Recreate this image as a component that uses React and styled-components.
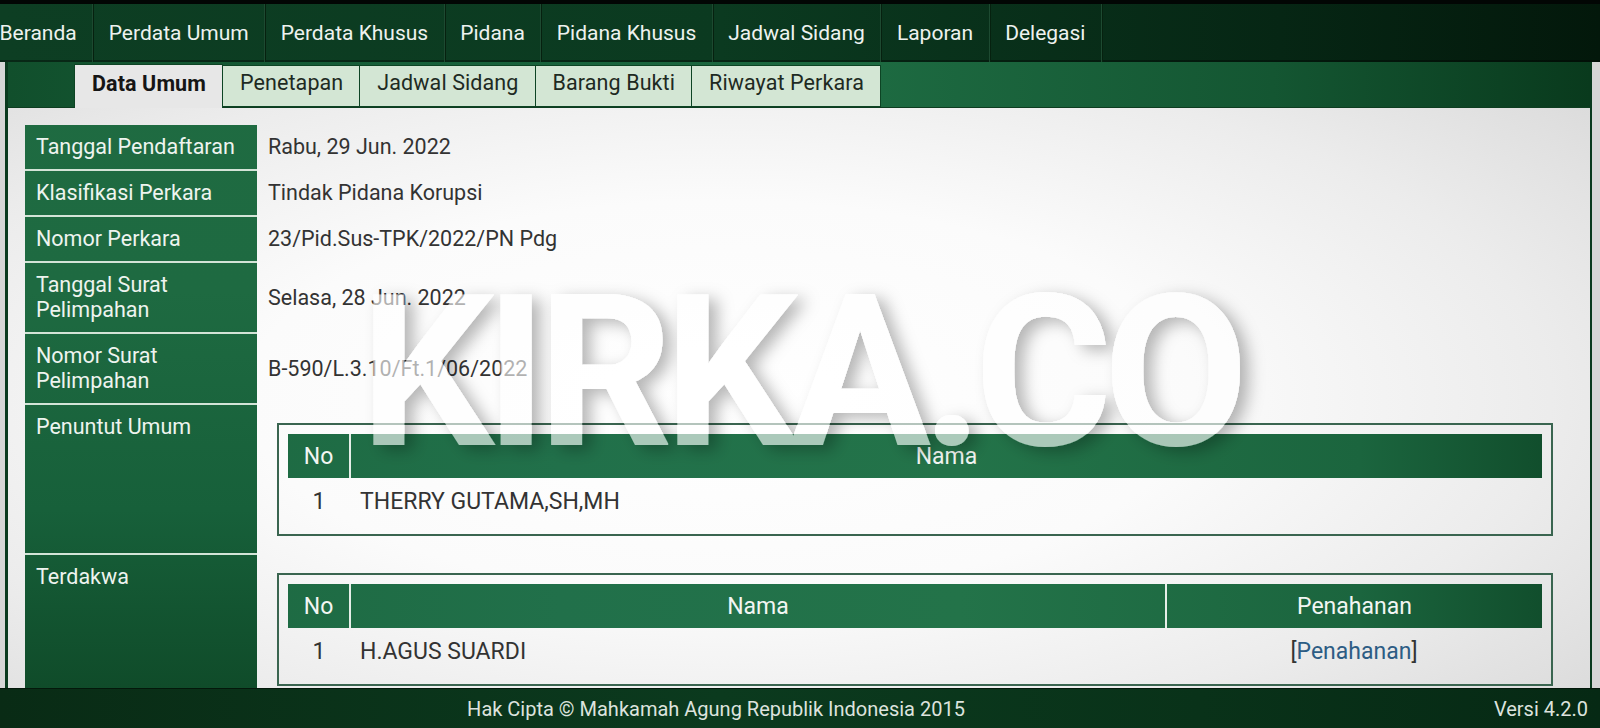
import React from "react";
import styled, { createGlobalStyle } from "styled-components";

const GlobalStyle = createGlobalStyle`
  html, body { margin: 0; padding: 0; height: 100%; overflow: hidden; }
  body { background: #d6d6d6; font-family: Roboto, "Noto Sans", "Liberation Sans", sans-serif; }
  #root { height: 100%; }
`;

const Page = styled.div`
  position: relative;
  height: 100vh;
  display: flex;
  flex-direction: column;
  overflow: hidden;
`;

const NavBar = styled.nav`
  flex: none;
  height: 58px;
  border-top: 4px solid #020604;
  display: flex;
  align-items: stretch;
  background: linear-gradient(to right, #0d3e23 0%, #0b3a20 45%, #062614 80%, #03180b 100%);
  box-shadow: inset 0 -2px 0 rgba(0, 0, 0, 0.35);
`;

const NavItem = styled.a`
  display: flex;
  align-items: center;
  padding: 0 15.5px 1px 15.5px;
  margin-left: ${(p) => (p.$first ? "-16px" : "0")};
  color: #eef2ef;
  font-size: 21px;
  text-decoration: none;
  border-right: 1px solid #1d4a31;
  box-shadow: 1px 0 0 #06210f;
`;

const Main = styled.div`
  flex: 1;
  min-height: 0;
  margin: 0 8px 0 5px;
  border-left: 3px solid #0a3a1e;
  border-right: 2px solid #0a3a1e;
  display: flex;
  flex-direction: column;
`;

const TabRow = styled.div`
  flex: none;
  height: 45px;
  box-sizing: border-box;
  padding-left: 66px;
  display: flex;
  align-items: flex-end;
  background: linear-gradient(to right, #114f2c 0%, #17603a 25%, #1d6a41 55%, #145632 80%, #093a1d 100%);
  position: relative;
  z-index: 1;
`;

const Tab = styled.div`
  height: ${(p) => (p.$active ? "44px" : "42px")};
  margin-bottom: ${(p) => (p.$active ? "-1px" : "0")};
  box-sizing: border-box;
  padding: 0 16px 7px 17px;
  display: flex;
  align-items: center;
  font-size: 21.5px;
  letter-spacing: 0.1px;
  font-weight: ${(p) => (p.$active ? 700 : 400)};
  color: ${(p) => (p.$active ? "#151515" : "#1e2a22")};
  background: ${(p) => (p.$active ? "#e7e7e7" : "#d3e6d4")};
  border: 1px solid #0d4424;
  border-bottom: ${(p) => (p.$active ? "none" : "1px solid #0d4424")};
  border-left: ${(p) => (p.$first ? "1px solid #0d4424" : "none")};
`;

const Panel = styled.div`
  flex: 1;
  min-height: 0;
  overflow: hidden;
  border-top: 1px solid #0d3d20;
  padding: 17px 17px 0 17px;
  background: radial-gradient(ellipse 75% 85% at 45% 50%, #ffffff 0%, #fbfbfb 40%, #ececec 70%, #d8d8d8 100%);
`;

const InfoGrid = styled.div`
  display: grid;
  grid-template-columns: 232px 1fr;
`;

const Label = styled.div`
  background: linear-gradient(to bottom, #1f6b41 0%, #1e6a41 40%, #17603a 70%, #0e4726 100%);
  background-attachment: fixed;
  color: #eef4ef;
  font-size: 21.5px;
  line-height: 25px;
  padding: 9px 10px 10px 11px;
  border-bottom: 2px solid #d3e4d7;
`;

const Value = styled.div`
  color: #333;
  font-size: 21.5px;
  line-height: 25px;
  padding: ${(p) => (p.$top ? "9px 11px 8px" : "9px 11px 10px")};
  display: flex;
  align-items: ${(p) => (p.$top ? "flex-start" : "center")};
  border-bottom: 2px solid transparent;
`;

const SubBox = styled.div`
  flex: 1;
  margin: 9px 9px 9px 9px;
  padding: 9px;
  border: 2px solid #3a6550;
`;

const SubTable = styled.table`
  width: 100%;
  border-collapse: collapse;
  border-spacing: 0;
  font-size: 23px;
`;

const HeadCell = styled.th`
  height: 44px;
  padding: 0;
  font-weight: 400;
  color: #f2f6f3;
  text-align: center;
  width: ${(p) => p.$w || "auto"};
  background: linear-gradient(to right, #1b663d 0%, #21704a 35%, #237349 60%, #1b653e 85%, #0e4727 100%);
  background-attachment: fixed;
  border-left: ${(p) => (p.$first ? "none" : "2px solid #e6eee8")};
`;

const BodyCell = styled.td`
  height: 47px;
  padding: 0 10px;
  color: #333;
  text-align: ${(p) => p.$align || "left"};
`;

const Link = styled.a`
  color: #2d5c84;
  text-decoration: none;
`;

const Footer = styled.footer`
  flex: none;
  height: 39px;
  display: flex;
  align-items: center;
  background: linear-gradient(to right, #092b15 0%, #0b3a1e 45%, #093219 75%, #062914 100%);
  border-top: 1px solid #04180b;
  color: #dde3de;
  font-size: 20px;
`;

const Copyright = styled.div`
  flex: 1;
  text-align: center;
`;

const Version = styled.div`
  width: 168px;
  text-align: right;
  padding-right: 12px;
  box-sizing: border-box;
`;

const Watermark = styled.div`
  position: absolute;
  left: 360px;
  top: 268px;
  font-family: Roboto, "Liberation Sans", sans-serif;
  font-weight: 700;
  font-size: 211px;
  line-height: 1;
  letter-spacing: -9px;
  color: #ffffff;
  white-space: nowrap;
  pointer-events: none;
  filter: url(#wmShadow);
`;

const Hidden = styled.svg`
  position: absolute;
  width: 0;
  height: 0;
`;

const navItems = [
  "Beranda",
  "Perdata Umum",
  "Perdata Khusus",
  "Pidana",
  "Pidana Khusus",
  "Jadwal Sidang",
  "Laporan",
  "Delegasi",
];

const tabs = ["Data Umum", "Penetapan", "Jadwal Sidang", "Barang Bukti", "Riwayat Perkara"];

const rows = [
  ["Tanggal Pendaftaran", "Rabu, 29 Jun. 2022"],
  ["Klasifikasi Perkara", "Tindak Pidana Korupsi"],
  ["Nomor Perkara", "23/Pid.Sus-TPK/2022/PN Pdg"],
  [["Tanggal Surat", "Pelimpahan"], "Selasa, 28 Jun. 2022"],
  [["Nomor Surat", "Pelimpahan"], "B-590/L.3.10/Ft.1/06/2022"],
];

function LabelText({ text }) {
  if (Array.isArray(text)) {
    return (
      <>
        {text[0]}
        <br />
        {text[1]}
      </>
    );
  }
  return text;
}

export default function App() {
  return (
    <Page>
      <GlobalStyle />
      <Hidden aria-hidden="true">
        <defs>
          <filter id="wmShadow" x="-10%" y="-20%" width="120%" height="140%">
            <feGaussianBlur in="SourceAlpha" stdDeviation="8" result="blur" />
            <feOffset in="blur" dx="9" dy="5" result="off" />
            <feComposite in="off" in2="SourceAlpha" operator="out" result="outside" />
            <feFlood floodColor="#000000" floodOpacity="0.28" result="col" />
            <feComposite in="col" in2="outside" operator="in" result="shadow" />
            <feColorMatrix
              in="SourceGraphic"
              type="matrix"
              values="1 0 0 0 0  0 1 0 0 0  0 0 1 0 0  0 0 0 0.62 0"
              result="letters"
            />
            <feMerge>
              <feMergeNode in="shadow" />
              <feMergeNode in="letters" />
            </feMerge>
          </filter>
        </defs>
      </Hidden>

      <NavBar>
        {navItems.map((n, i) => (
          <NavItem key={n} $first={i === 0}>
            {n}
          </NavItem>
        ))}
      </NavBar>

      <Main>
        <TabRow>
          {tabs.map((t, i) => (
            <Tab key={t} $active={i === 0} $first={i === 0}>
              {t}
            </Tab>
          ))}
        </TabRow>
        <Panel>
          <InfoGrid>
            {rows.map(([l, v], i) => (
              <React.Fragment key={i}>
                <Label>
                  <LabelText text={l} />
                </Label>
                <Value>{v}</Value>
              </React.Fragment>
            ))}
            <Label>Penuntut Umum</Label>
            <Value $top>
              <SubBox>
                <SubTable>
                  <thead>
                    <tr>
                      <HeadCell $first $w="61px">No</HeadCell>
                      <HeadCell>Nama</HeadCell>
                    </tr>
                  </thead>
                  <tbody>
                    <tr>
                      <BodyCell $align="center">1</BodyCell>
                      <BodyCell>THERRY GUTAMA,SH,MH</BodyCell>
                    </tr>
                  </tbody>
                </SubTable>
              </SubBox>
            </Value>
            <Label>Terdakwa</Label>
            <Value $top>
              <SubBox>
                <SubTable>
                  <thead>
                    <tr>
                      <HeadCell $first $w="61px">No</HeadCell>
                      <HeadCell>Nama</HeadCell>
                      <HeadCell $w="375px">Penahanan</HeadCell>
                    </tr>
                  </thead>
                  <tbody>
                    <tr>
                      <BodyCell $align="center">1</BodyCell>
                      <BodyCell>H.AGUS SUARDI</BodyCell>
                      <BodyCell $align="center">
                        [<Link href="#">Penahanan</Link>]
                      </BodyCell>
                    </tr>
                  </tbody>
                </SubTable>
              </SubBox>
            </Value>
          </InfoGrid>
        </Panel>
      </Main>

      <Footer>
        <Copyright>Hak Cipta © Mahkamah Agung Republik Indonesia 2015</Copyright>
        <Version>Versi 4.2.0</Version>
      </Footer>

      <Watermark>KIRKA.CO</Watermark>
    </Page>
  );
}
